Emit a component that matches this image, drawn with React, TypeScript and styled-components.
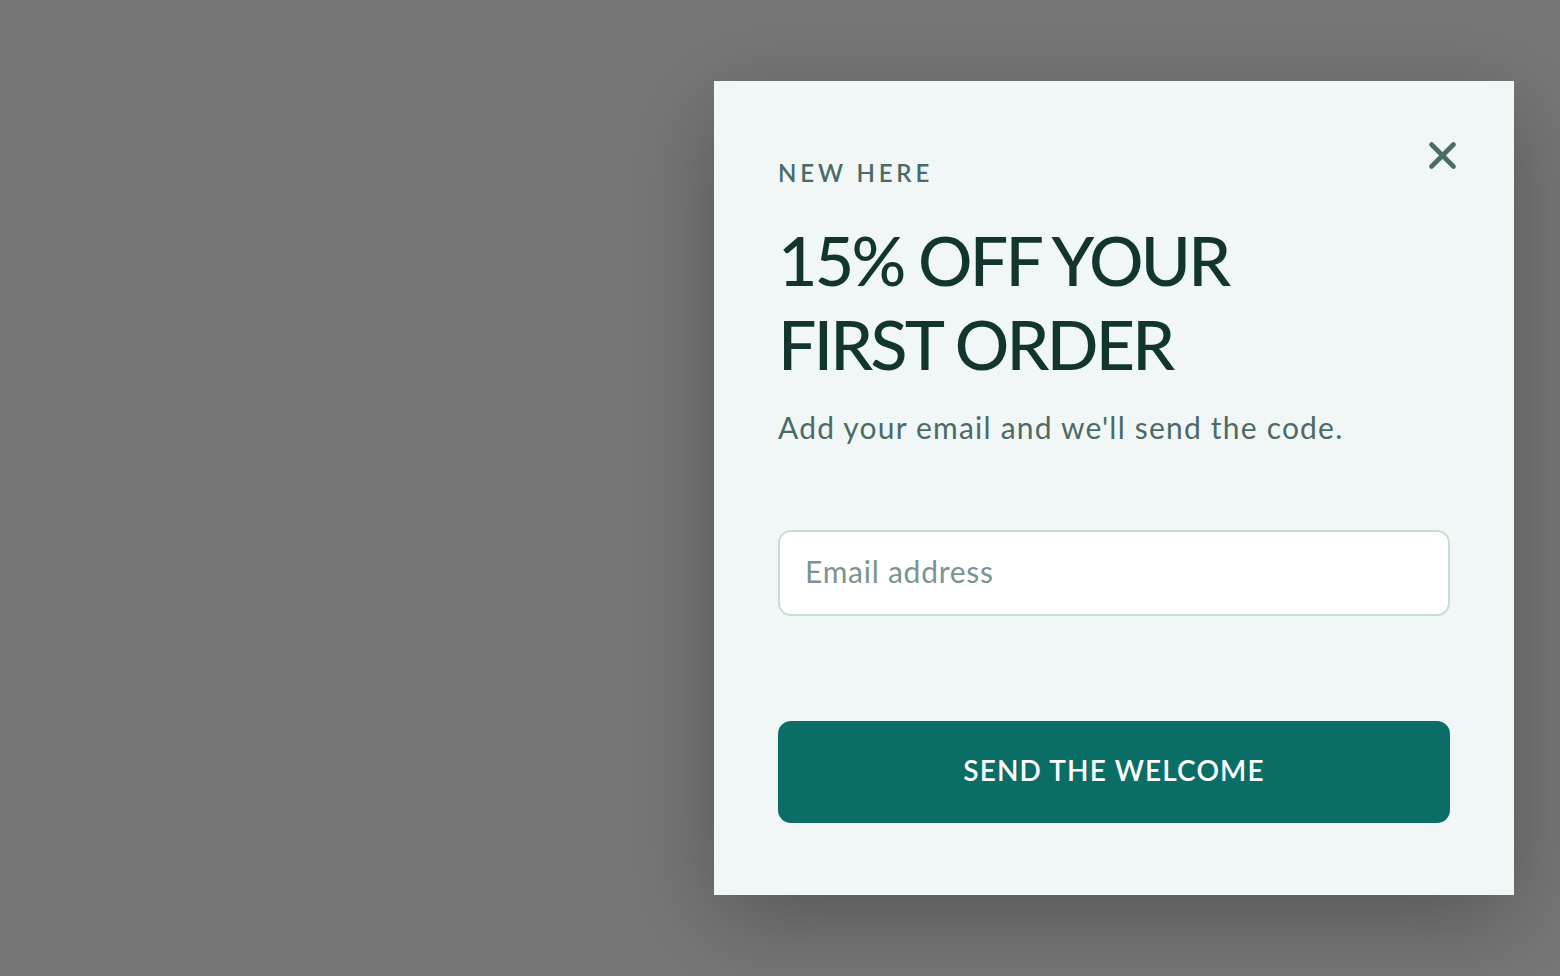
import styled, { createGlobalStyle } from "styled-components";

const GlobalStyle = createGlobalStyle`
  html, body {
    margin: 0;
    padding: 0;
    height: 100%;
  }
  body {
    font-family: "Lato", "Noto Sans", sans-serif;
    -webkit-font-smoothing: antialiased;
  }
  #root {
    height: 100%;
  }
`;

const Overlay = styled.div`
  box-sizing: border-box;
  width: 100%;
  height: 976px;
  background: #777777;
  display: flex;
  align-items: center;
  justify-content: flex-end;
  padding-right: 46px;
`;

const Modal = styled.div`
  position: relative;
  box-sizing: border-box;
  width: 800px;
  height: 814px;
  background: #f1f7f7;
  padding: 78px 64px 72px;
  display: flex;
  flex-direction: column;
  box-shadow: 0 24px 90px rgba(0, 0, 0, 0.28);
`;

const CloseButton = styled.button`
  position: absolute;
  top: 60px;
  right: 57px;
  width: 29px;
  height: 29px;
  padding: 0;
  border: none;
  background: transparent;
  display: flex;
  align-items: center;
  justify-content: center;
  cursor: pointer;
  color: #4a6b66;
`;

const Eyebrow = styled.div`
  font-size: 24px;
  line-height: 1.2;
  font-weight: 600;
  letter-spacing: 0.16em;
  color: #4a6b66;
  text-transform: uppercase;
`;

const Heading = styled.h2`
  margin: 30px 0 0;
  font-size: 68px;
  line-height: 84px;
  font-weight: 500;
  color: #12362f;
  letter-spacing: -0.04em;
`;

const Subtitle = styled.p`
  margin: 20px 0 0;
  font-size: 30px;
  line-height: 42px;
  font-weight: 400;
  color: #4d6a65;
  letter-spacing: 0.04em;
`;

const EmailInput = styled.input`
  box-sizing: border-box;
  margin-top: 82px;
  width: 100%;
  height: 87px;
  padding: 0 25px 4px;
  border: 2px solid #c7ddd9;
  border-radius: 13px;
  background: #ffffff;
  font-family: inherit;
  font-size: 30px;
  letter-spacing: 0.025em;
  color: #12362f;
  outline: none;

  &::placeholder {
    color: #7a9490;
  }
`;

const SubmitButton = styled.button`
  margin-top: 105px;
  width: 100%;
  height: 102px;
  padding: 0 0 4px;
  border: none;
  border-radius: 13px;
  background: #0b6e66;
  color: #ffffff;
  font-family: inherit;
  font-size: 28px;
  font-weight: 600;
  letter-spacing: 0.04em;
  text-transform: uppercase;
  cursor: pointer;
`;

export default function App() {
  return (
    <>
      <GlobalStyle />
      <Overlay>
        <Modal role="dialog" aria-labelledby="welcome-title">
          <CloseButton aria-label="Close">
            <svg width="29" height="29" viewBox="0 0 29 29" fill="none">
              <path
                d="M3.5 3.5L25.5 25.5M25.5 3.5L3.5 25.5"
                stroke="currentColor"
                strokeWidth="4.6"
                strokeLinecap="round"
              />
            </svg>
          </CloseButton>
          <Eyebrow>New here</Eyebrow>
          <Heading id="welcome-title">
            15% OFF YOUR
            <br />
            FIRST ORDER
          </Heading>
          <Subtitle>Add your email and we'll send the code.</Subtitle>
          <EmailInput type="email" placeholder="Email address" />
          <SubmitButton type="button">Send the welcome</SubmitButton>
        </Modal>
      </Overlay>
    </>
  );
}
